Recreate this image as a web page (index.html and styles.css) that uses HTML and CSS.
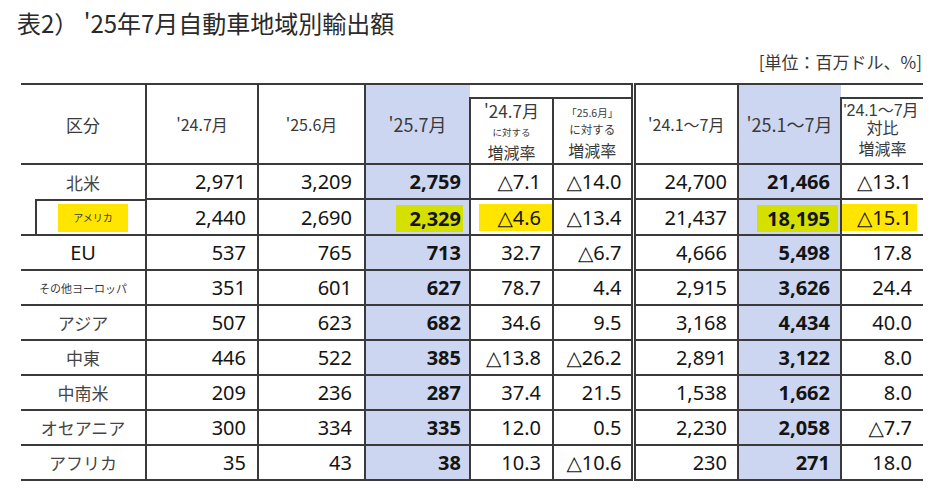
FILE: index.html
```html
<!DOCTYPE html>
<html lang="ja">
<head>
<meta charset="utf-8">
<title>表2）'25年7月自動車地域別輸出額</title>
<link rel="stylesheet" href="styles.css">
</head>
<body>
<div class="page">
  <h1 class="title">表2）&nbsp;'25年7月自動車地域別輸出額</h1>
  <div class="unit">[単位：百万ドル、%]</div>
  <table class="tbl">
    <colgroup>
      <col class="w0"><col class="w1"><col class="w2"><col class="w3"><col class="w4"><col class="w5"><col class="w6"><col class="w7"><col class="w8">
    </colgroup>
    <thead>
      <tr class="hr1">
        <th rowspan="2" class="h-region">区分</th>
        <th rowspan="2" class="h-month">'24.7月</th>
        <th rowspan="2" class="h-month">'25.6月</th>
        <th rowspan="2" class="h-month blue big">'25.7月</th>
        <th colspan="2" class="h-empty"></th>
        <th rowspan="2" class="h-month dbl">'24.1〜7月</th>
        <th rowspan="2" class="h-month blue big">'25.1〜7月</th>
        <th class="h-empty"></th>
      </tr>
      <tr class="hr2">
        <th class="h-rate r1">
          <span class="a">'24.7月</span>
          <span class="b">に対する</span>
          <span class="c">増減率</span>
        </th>
        <th class="h-rate r2">
          <span class="a">「25.6月」</span>
          <span class="b">に対する</span>
          <span class="c">増減率</span>
        </th>
        <th class="h-rate r3">
          <span class="a">'24.1〜7月</span>
          <span class="b">対比</span>
          <span class="c">増減率</span>
        </th>
      </tr>
    </thead>
    <tbody>
      <tr class="row-na">
        <td class="reg">北米</td><td>2,971</td><td>3,209</td><td>2,759</td><td>△7.1</td><td>△14.0</td><td>24,700</td><td>21,466</td><td>△13.1</td>
      </tr>
      <tr class="row-us">
        <td class="reg sub"><div class="subbox"><span class="hl-name">アメリカ</span></div></td>
        <td>2,440</td><td>2,690</td>
        <td class="hl-b1"><span class="hl g">2,329</span></td>
        <td class="hl-c4"><span class="hl y">△4.6</span></td>
        <td>△13.4</td><td>21,437</td>
        <td class="hl-b2"><span class="hl g">18,195</span></td>
        <td class="hl-c8"><span class="hl y">△15.1</span></td>
      </tr>
      <tr>
        <td class="reg eu">EU</td><td>537</td><td>765</td><td>713</td><td>32.7</td><td>△6.7</td><td>4,666</td><td>5,498</td><td>17.8</td>
      </tr>
      <tr>
        <td class="reg small">その他ヨーロッパ</td><td>351</td><td>601</td><td>627</td><td>78.7</td><td>4.4</td><td>2,915</td><td>3,626</td><td>24.4</td>
      </tr>
      <tr>
        <td class="reg">アジア</td><td>507</td><td>623</td><td>682</td><td>34.6</td><td>9.5</td><td>3,168</td><td>4,434</td><td>40.0</td>
      </tr>
      <tr>
        <td class="reg">中東</td><td>446</td><td>522</td><td>385</td><td>△13.8</td><td>△26.2</td><td>2,891</td><td>3,122</td><td>8.0</td>
      </tr>
      <tr>
        <td class="reg">中南米</td><td>209</td><td>236</td><td>287</td><td>37.4</td><td>21.5</td><td>1,538</td><td>1,662</td><td>8.0</td>
      </tr>
      <tr>
        <td class="reg">オセアニア</td><td>300</td><td>334</td><td>335</td><td>12.0</td><td>0.5</td><td>2,230</td><td>2,058</td><td>△7.7</td>
      </tr>
      <tr>
        <td class="reg">アフリカ</td><td>35</td><td>43</td><td>38</td><td>10.3</td><td>△10.6</td><td>230</td><td>271</td><td>18.0</td>
      </tr>
    </tbody>
  </table>
</div>
</body>
</html>
```

FILE: styles.css
```css
* { box-sizing: border-box; }

body {
  margin: 0;
  background: #ffffff;
  color: #1a1a1a;
  font-family: "Noto Sans CJK JP", "Noto Sans", sans-serif;
}

.page {
  width: 941px;
  padding: 7px 19px 0 17px;
}

.title {
  margin: 0;
  font-size: 24px;
  font-weight: 400;
  line-height: 32px;
  color: #2a2a2a;
  white-space: nowrap;
}

.unit {
  margin-top: 11px;
  text-align: right;
  font-size: 17px;
  line-height: 24px;
  color: #383838;
}

.tbl {
  margin: 9px 0 0 4px;
  width: 902px;
  table-layout: fixed;
  border-collapse: collapse;
  border-top: 2px solid #3a3a3a;
}

.w0 { width: 125px; }
.w1 { width: 112px; }
.w2 { width: 107px; }
.w3 { width: 105px; }
.w4 { width: 83px; }
.w5 { width: 80px; }
.w6 { width: 105px; }
.w7 { width: 103px; }
.w8 { width: 82px; }

.tbl th {
  font-weight: 400;
  color: #3a3a3a;
  padding: 0;
  border-bottom: 2px solid #3a3a3a;
  border-left: 2px solid #3a3a3a;
  text-align: center;
  vertical-align: middle;
  white-space: nowrap;
}

.hr1 { height: 14px; }
.hr2 { height: 66px; }

.tbl th.h-region {
  border-left: none;
  font-size: 17px;
}

.h-month { font-size: 16px; }
.h-month.big { font-size: 18px; }

.blue { background: #ccd6f1; }

.tbl th.h-empty {
  border-left: none;
  border-bottom: 2px solid #3a3a3a;
}

.tbl th.dbl,
.tbl td:nth-child(7) {
  border-left: 5px double #3a3a3a;
}

.h-rate { vertical-align: top; }
.h-rate span { display: block; }

.r1 .a { font-size: 17px; line-height: 20px; }
.r1 .b { font-size: 9.5px; line-height: 22px; }
.r1 .c { font-size: 16px; line-height: 18px; }

.tbl th.r2 { padding-top: 6px; }
.r2 .a { font-size: 10.5px; line-height: 14px; }
.r2 .b { font-size: 11.5px; line-height: 18px; }
.r2 .c { font-size: 16px; line-height: 24px; }

.tbl th.r3 { padding-top: 2px; }
.r3 span { font-family: "Liberation Sans", "Noto Sans CJK JP", sans-serif; }
.r3 .a { font-size: 16px; line-height: 18px; margin-left: -3px; }
.r3 .b { font-size: 16px; line-height: 18px; }
.r3 .c { font-size: 16px; line-height: 24px; }

.tbl td {
  height: 35px;
  padding: 0 11px 0 0;
  border-bottom: 2px solid #3a3a3a;
  border-left: 2px solid #3a3a3a;
  text-align: right;
  vertical-align: middle;
  font-family: "Noto Sans", "DejaVu Sans", "Noto Sans CJK JP", sans-serif;
  font-size: 20px;
  color: #141414;
  white-space: nowrap;
}

.tbl td:nth-child(3) { padding-right: 12px; }
.tbl td:nth-child(4) { padding-right: 8px; }
.tbl td:nth-child(6) { padding-right: 9px; }
.tbl td:nth-child(7) { padding-right: 10px; }
.tbl td:nth-child(8) { padding-right: 10px; }

.tbl td:nth-child(4),
.tbl td:nth-child(8) {
  background: #ccd6f1;
  font-weight: 700;
}

.tbl td.reg {
  border-left: none;
  padding: 0;
  text-align: center;
  font-family: "Noto Sans CJK JP", sans-serif;
  font-size: 17px;
  color: #454545;
}

.tbl td.reg.eu {
  font-family: "Noto Sans", sans-serif;
  font-size: 20px;
  color: #141414;
}

.tbl td.reg.small {
  font-size: 11px;
  color: #383838;
}

.row-na td.reg { border-bottom: none; }

.tbl td.reg.sub {
  padding-left: 14px;
  vertical-align: top;
}

.subbox {
  height: 35px;
  border-top: 2px solid #3a3a3a;
  border-left: 2px solid #3a3a3a;
  display: flex;
  align-items: center;
  justify-content: flex-start;
  padding-left: 21px;
}

.hl-name {
  display: inline-block;
  flex: 0 0 70px;
  width: 70px;
  height: 28px;
  line-height: 28px;
  background: #ffe500;
  font-size: 10px;
  color: #3c3c3c;
  text-align: center;
}

.hl {
  display: inline-block;
  height: 27px;
  line-height: 27px;
  vertical-align: middle;
}

.hl.y { background: #ffe500; }
.hl.g { background: #d5e000; }

.tbl td.hl-b1 { padding-right: 6px; }
.hl-b1 .hl { padding: 0 2px 0 14px; }

.tbl td.hl-c4 { padding-right: 0; }
.hl-c4 .hl { display: block; margin-left: 8px; padding-right: 11px; }

.tbl td.hl-b2 { padding-right: 2px; }
.hl-b2 .hl { padding: 0 8px 0 10px; }

.tbl td.hl-c8 { padding-right: 6px; }
.hl-c8 .hl { display: block; margin-left: 0; padding-right: 5px; }
```
